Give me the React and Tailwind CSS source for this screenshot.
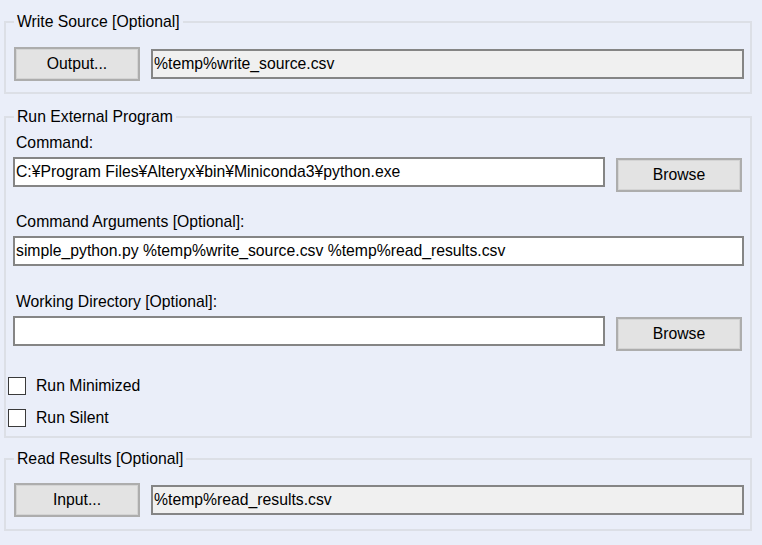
import React from "react";

const Button = ({ children, className = "" }) => (
  <button
    className={
      "h-[34px] w-[126px] shrink-0 border-2 border-[#adadad] bg-[#e3e3e3] shadow-[inset_0_0_0_1px_#d4d4d4] text-center text-black leading-[18px] " +
      className
    }
  >
    {children}
  </button>
);

const TextBox = ({ value = "", readOnly = false, className = "" }) => (
  <div
    className={
      "h-[30px] border-2 border-[#858585] px-px leading-[26px] whitespace-nowrap overflow-hidden " +
      (readOnly ? "bg-[#f0f0f0] " : "bg-white ") +
      className
    }
  >
    {value}
  </div>
);

const Check = ({ label }) => (
  <div className="flex items-center h-[18px]">
    <div className="h-[18px] w-[18px] border-[1.5px] border-[#3a3a3a] bg-white" />
    <span className="ml-[10px] leading-[18px]">{label}</span>
  </div>
);

const App = () => {
  return (
    <div
      className="w-[762px] h-[545px] bg-[#eaeef9] pt-[13px] pl-[4px] pr-[10px] text-[15.75px] text-black"
      style={{ fontFamily: '"Liberation Sans", Arial, sans-serif' }}
    >
      {/* Write Source */}
      <fieldset className="border-2 border-[#dcdfe6] pl-[8px] pr-[6px] pt-[16px] pb-[11px]">
        <legend className="px-[3px] leading-[18px]">Write Source [Optional]</legend>
        <div className="flex items-start gap-[11px]">
          <Button>Output...</Button>
          <TextBox readOnly value="%temp%write_source.csv" className="flex-1 mt-[2px]" />
        </div>
      </fieldset>

      {/* Run External Program */}
      <fieldset className="mt-[14px] border-2 border-[#dcdfe6] pl-[2px] pr-[6px] pt-[8px] pb-[9px]">
        <legend className="ml-[6px] px-[3px] leading-[18px]">Run External Program</legend>

        <p className="ml-[8px] leading-[18px] mb-[5px]">Command:</p>
        <div className="flex items-start ml-[5px]">
          <TextBox value="C:¥Program Files¥Alteryx¥bin¥Miniconda3¥python.exe" className="w-[592px]" />
          <Button className="ml-[11px] mt-px">Browse</Button>
        </div>

        <p className="ml-[8px] mt-[21px] leading-[18px] mb-[5px]">Command Arguments [Optional]:</p>
        <TextBox
          value="simple_python.py %temp%write_source.csv %temp%read_results.csv"
          className="ml-[5px]"
        />

        <p className="ml-[8px] mt-[27px] leading-[18px] mb-[5px]">Working Directory [Optional]:</p>
        <div className="flex items-start ml-[5px]">
          <TextBox className="w-[592px]" />
          <Button className="ml-[11px] mt-px">Browse</Button>
        </div>

        <div className="mt-[26px] flex flex-col gap-[14px]">
          <Check label="Run Minimized" />
          <Check label="Run Silent" />
        </div>
      </fieldset>

      {/* Read Results */}
      <fieldset className="mt-[12px] border-2 border-[#dcdfe6] pl-[8px] pr-[6px] pt-[15px] pb-[12px]">
        <legend className="px-[3px] leading-[18px]">Read Results [Optional]</legend>
        <div className="flex items-start gap-[11px]">
          <Button>Input...</Button>
          <TextBox readOnly value="%temp%read_results.csv" className="flex-1 mt-[2px]" />
        </div>
      </fieldset>
    </div>
  );
};

export default App;
